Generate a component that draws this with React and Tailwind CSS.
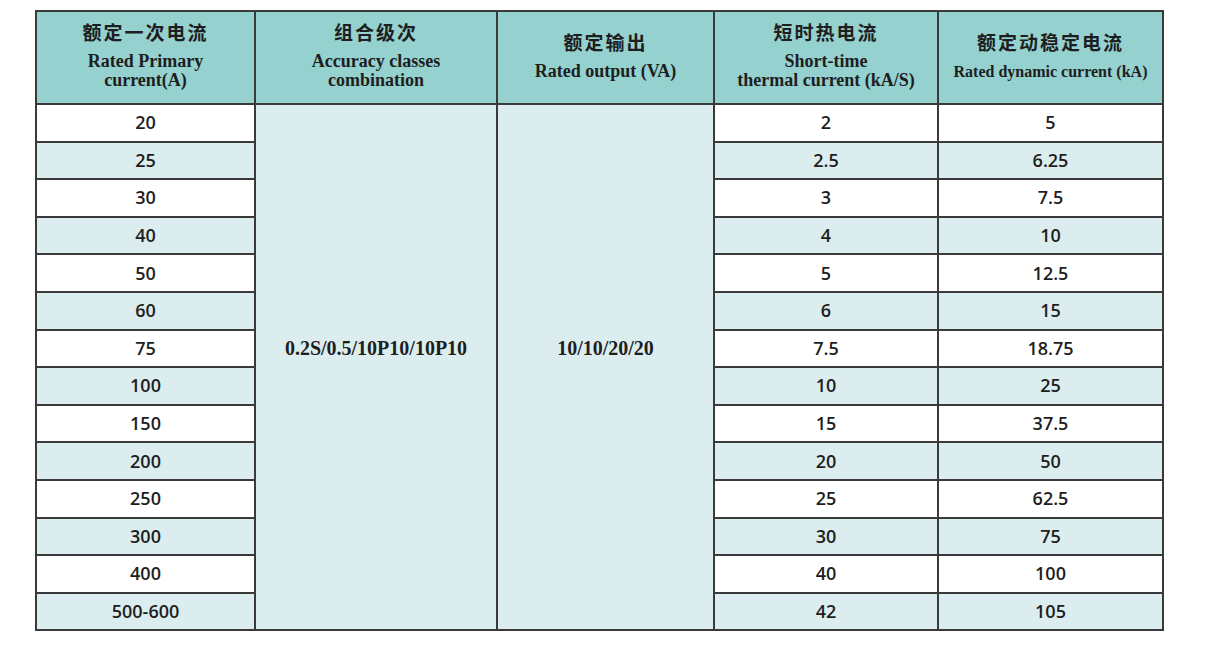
const rows = [
  ['20', '2', '5'],
  ['25', '2.5', '6.25'],
  ['30', '3', '7.5'],
  ['40', '4', '10'],
  ['50', '5', '12.5'],
  ['60', '6', '15'],
  ['75', '7.5', '18.75'],
  ['100', '10', '25'],
  ['150', '15', '37.5'],
  ['200', '20', '50'],
  ['250', '25', '62.5'],
  ['300', '30', '75'],
  ['400', '40', '100'],
  ['500-600', '42', '105'],
]

const cn = "font-['Noto_Sans_CJK_SC',sans-serif] font-bold text-[19px] tracking-[2px] leading-[24px]"
const en = "font-['Liberation_Serif',serif] font-bold leading-[19px]"
const num = "font-['Open_Sans',sans-serif] font-semibold text-[18px] text-[#1e1e1e]"

function Head({ zh, lines, size = 'text-[18px]' }) {
  return (
    <th className="border-2 border-[#3a3a3a] bg-[#94d1cf] text-[#1e1e1e] align-middle text-center font-normal pb-[5px]">
      <div className={cn}>{zh}</div>
      <div className={`${en} ${size} mt-[8px]`}>
        {lines.map(l => <div key={l}>{l}</div>)}
      </div>
    </th>
  )
}

export default function App() {
  return (
    <div className="w-[1212px] h-[664px] bg-white pt-[10px] pl-[35px]">
      <table className="border-collapse table-fixed w-[1127px]">
        <colgroup>
          <col className="w-[219px]" />
          <col className="w-[242px]" />
          <col className="w-[217px]" />
          <col className="w-[224px]" />
          <col className="w-[225px]" />
        </colgroup>
        <thead>
          <tr className="h-[93px]">
            <Head zh="额定一次电流" lines={['Rated Primary', 'current(A)']} />
            <Head zh="组合级次" lines={['Accuracy classes', 'combination']} />
            <Head zh="额定输出" lines={['Rated output (VA)']} />
            <Head zh="短时热电流" lines={['Short-time', 'thermal current (kA/S)']} />
            <Head zh="额定动稳定电流" lines={['Rated dynamic current (kA)']} size="text-[16px]" />
          </tr>
        </thead>
        <tbody>
          {rows.map((r, i) => {
            const bg = i % 2 === 0 ? 'bg-white' : 'bg-[#dcedf0]'
            return (
              <tr key={r[0]} className="h-[37.6px]">
                <td className={`border-2 border-[#3a3a3a] text-center ${bg} ${num}`}>{r[0]}</td>
                {i === 0 && (
                  <>
                    <td rowSpan={14} className={`border-2 border-[#3a3a3a] bg-[#dcedf0] text-center text-[#1e1e1e] pb-[37px] text-[20px] ${en}`}>0.2S/0.5/10P10/10P10</td>
                    <td rowSpan={14} className={`border-2 border-[#3a3a3a] bg-[#dcedf0] text-center text-[#1e1e1e] pb-[37px] text-[20px] ${en}`}>10/10/20/20</td>
                  </>
                )}
                <td className={`border-2 border-[#3a3a3a] text-center ${bg} ${num}`}>{r[1]}</td>
                <td className={`border-2 border-[#3a3a3a] text-center ${bg} ${num}`}>{r[2]}</td>
              </tr>
            )
          })}
        </tbody>
      </table>
    </div>
  )
}
